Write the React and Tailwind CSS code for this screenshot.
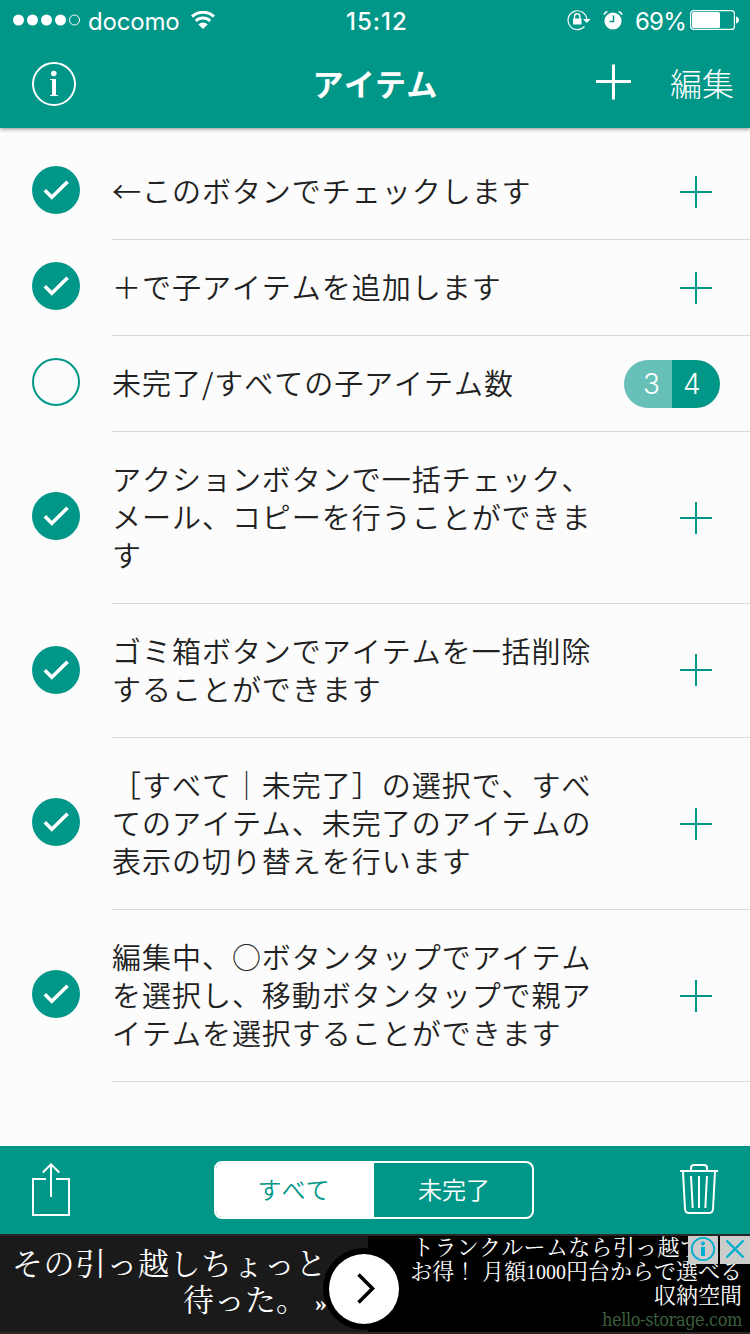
import React, { useState } from 'react';

const initialItems = [
  { id: 1, lines: ['←このボタンでチェックします'], done: true },
  { id: 2, lines: ['＋で子アイテムを追加します'], done: true },
  { id: 3, lines: ['未完了/すべての子アイテム数'], done: false, open: 3, total: 4 },
  { id: 4, lines: ['アクションボタンで一括チェック、', 'メール、コピーを行うことができま', 'す'], done: true },
  { id: 5, lines: ['ゴミ箱ボタンでアイテムを一括削除', 'することができます'], done: true },
  { id: 6, lines: ['［すべて｜未完了］の選択で、すべ', 'てのアイテム、未完了のアイテムの', '表示の切り替えを行います'], done: true },
  { id: 7, lines: ['編集中、○ボタンタップでアイテム', 'を選択し、移動ボタンタップで親ア', 'イテムを選択することができます'], done: true },
];

const StatusBar = () => (
  <div className="flex h-10 items-center pl-[13px] font-['Inter'] text-2xl leading-10">
    <svg width="68" height="12" viewBox="0 0 68 12" fill="white">
      <circle cx="5.5" cy="6" r="5.5" />
      <circle cx="19.5" cy="6" r="5.5" />
      <circle cx="33.5" cy="6" r="5.5" />
      <circle cx="47.5" cy="6" r="5.5" />
      <circle cx="61.5" cy="6" r="5" fill="none" stroke="white" />
    </svg>
    <span className="ml-[7px] w-[91px] pt-[3px] whitespace-nowrap tracking-[-0.2px]">docomo</span>
    <svg className="ml-3" width="24" height="18" viewBox="0 0 24 18" fill="none" stroke="white" strokeWidth="3">
      <path d="M1 5.6a16 16 0 0 1 22 0" />
      <path d="M4.8 9.8a10.5 10.5 0 0 1 14.4 0" />
      <path d="M12 18 7.3 13.4a7 7 0 0 1 9.4 0Z" fill="white" stroke="none" />
    </svg>
    <span className="ml-[131px] w-[64px] pt-[3px] whitespace-nowrap font-medium tracking-[1px]">15:12</span>
    <svg className="ml-[157px]" width="24" height="22" viewBox="0 0 24 22" fill="none" stroke="white" strokeWidth="1.2">
      <path d="M17.5 17.4A9.4 9.4 0 1 1 19.8 10.5" />
      <path d="M16 10h7.5l-3.7 4Z" fill="white" stroke="none" />
      <path d="M6 9.5h8.5v6H6Z" fill="white" stroke="none" />
      <path d="M7.5 10V7.5a2.7 2.7 0 0 1 5.4 0V10" strokeWidth="1.4" />
    </svg>
    <svg className="ml-3" width="20" height="20" viewBox="0 0 20 20">
      <circle cx="10" cy="11" r="8.6" fill="white" />
      <path d="M1 4.6A5 5 0 0 1 4.4 1.6M15.6 1.6A5 5 0 0 1 19 4.6" stroke="white" strokeWidth="1.6" fill="none" />
      <path d="M10.5 5.5v6H6.5" stroke="#009688" strokeWidth="1.5" fill="none" />
    </svg>
    <span className="ml-3 w-[50px] pt-[3px] whitespace-nowrap tracking-[-0.8px]">69%</span>
    <svg className="ml-[5px] shrink-0" width="50" height="20" viewBox="0 0 50 20">
      <rect x="0.6" y="0.6" width="43.8" height="18.8" rx="3" fill="none" stroke="white" strokeWidth="1.2" />
      <rect x="2" y="2" width="28" height="16" rx="1.5" fill="white" />
      <path d="M46 6.5q3 1 3 3.5t-3 3.5Z" fill="white" />
    </svg>
  </div>
);

const InfoIcon = () => (
  <svg width="44" height="44" viewBox="0 0 44 44" fill="white">
    <circle cx="22" cy="22" r="21" fill="none" stroke="white" strokeWidth="2" />
    <circle cx="21.8" cy="11.5" r="2.8" />
    <path d="M18 17h6v16h2v1h-8v-1h2V18h-2Z" />
  </svg>
);

const CheckCircle = ({ done, onClick }) => (
  <button onClick={onClick} className="size-12">
    <svg width="48" height="48" viewBox="0 0 48 48" fill="none">
      {done ? (
        <>
          <circle cx="24" cy="24" r="24" fill="#009688" />
          <path d="m12.8 24.3 7 7L35.6 15.8" stroke="white" strokeWidth="3.6" />
        </>
      ) : (
        <circle cx="24" cy="24" r="23" stroke="#009688" strokeWidth="2" />
      )}
    </svg>
  </button>
);

const ItemRow = ({ item, onToggle }) => (
  <li className="flex">
    <div className={`flex w-28 items-center pl-8 ${item.lines.length === 2 ? 'pb-0.5' : 'pb-1'}`}>
      <CheckCircle done={item.done} onClick={() => onToggle(item.id)} />
    </div>
    <div className="flex flex-1 items-center border-b border-[#d9d9d9]">
      <p className="flex-1 whitespace-nowrap pt-[27px] pb-[30px] text-[29px] font-[350] leading-[38px] tracking-[0.97px] text-[#212121]">
        {item.lines.map((line) => (
          <span key={line} className="block">{line}</span>
        ))}
      </p>
      {item.total ? (
        <div className="mr-[30px] flex h-12 overflow-hidden rounded-full font-['Inter'] text-[28px] font-[350] leading-[48px] text-white">
          <span className="w-12 bg-[#66c0b8] pl-[19px]">{item.open}</span>
          <span className="w-12 bg-[#009688] pl-[11px]">{item.total}</span>
        </div>
      ) : (
        <svg
          className={item.lines.length === 2 ? 'mr-[38px] mb-0.5' : 'mr-[38px]'}
          width="32"
          height="32"
          viewBox="0 0 32 32"
          stroke="#009688"
          strokeWidth="2"
        >
          <path d="M16 0v32M0 16h32" />
        </svg>
      )}
    </div>
  </li>
);

const AdBanner = () => (
  <div className="relative flex h-[100px] overflow-hidden border-y-2 border-[#2b2727] bg-black font-['Noto_Serif_CJK_JP','Noto_Serif_JP',serif] text-white">
    <div className="w-[368px] bg-[#1a1a1a] pt-2 pr-[41px] text-right text-[31px] leading-9 whitespace-nowrap">
      <p className="h-9 tracking-[0.5px]">その引っ越しちょっと</p>
      <p className="h-9">待った。<span className="ml-2 font-['Liberation_Serif'] text-2xl font-bold">»</span></p>
    </div>
    <div className="flex-1 pr-2 text-right text-[22px] leading-6 whitespace-nowrap">
      <p className="h-[22px] pr-10 leading-[20px] tracking-[0.3px]">トランクルームなら引っ越す</p>
      <p className="h-6">お得！ 月額<span className="font-['Liberation_Serif'] text-xl">1000</span>円台からで選べる</p>
      <p className="h-6">収納空間</p>
      <p className="pt-0.5 font-['DejaVu_Serif_Condensed','DejaVu_Serif'] text-lg leading-6 tracking-[-0.4px] text-[#3a5f3c]">hello-storage.com</p>
    </div>
    <div className="absolute top-3 left-[323px] flex size-[82px] items-center justify-center rounded-full bg-black">
      <svg width="70" height="70" viewBox="0 0 70 70" fill="none">
        <circle cx="35" cy="35" r="35" fill="white" />
        <path d="m29.5 20.5 14 14-14 14" stroke="black" strokeWidth="3.6" />
      </svg>
    </div>
    <div className="absolute -top-0.5 right-0 flex h-[30px] gap-0.5 text-[#00aecd]">
      <svg className="bg-[#cccccc]" width="30" height="30" viewBox="0 0 30 30" fill="none" stroke="currentColor">
        <circle cx="15" cy="15" r="11.2" strokeWidth="1.8" />
        <circle cx="15" cy="9.5" r="2" fill="currentColor" stroke="none" />
        <path d="M13 13h4v9h-4Z" fill="currentColor" stroke="none" />
      </svg>
      <svg className="bg-[#cccccc]" width="30" height="30" viewBox="0 0 30 30" fill="none" stroke="currentColor">
        <path d="m6.5 6.5 17 17m0-17-17 17" strokeWidth="2.4" />
      </svg>
    </div>
  </div>
);

const App = () => {
  const [items, setItems] = useState(initialItems);
  const [filter, setFilter] = useState('all');

  const toggleItem = (id) => {
    setItems((prev) => prev.map((item) => (item.id === id ? { ...item, done: !item.done } : item)));
  };

  const visibleItems = filter === 'all' ? items : items.filter((item) => !item.done);

  return (
    <div className="flex h-[1334px] w-[750px] flex-col overflow-hidden bg-[#fcfcfc] font-['Noto_Sans_CJK_JP',sans-serif] [font-kerning:none]">
      <header className="z-10 h-32 bg-[#009688] text-white shadow-[0_1px_4px_rgba(0,0,0,0.45)]">
        <StatusBar />
        <div className="grid h-[88px] grid-cols-3 items-center px-4">
          <div className="pl-4"><InfoIcon /></div>
          <h1 className="pb-0.5 text-center text-[31px] font-bold leading-[44px] tracking-[0.3px]">アイテム</h1>
          <div className="flex items-center justify-end gap-[38px]">
            <svg className="-mt-1" width="36" height="36" viewBox="0 0 36 36" stroke="white" strokeWidth="3">
              <path d="M17.5 0.5v35M0 17.5h35" />
            </svg>
            <button className="pb-1 text-[32px] font-light leading-[44px]">編集</button>
          </div>
        </div>
      </header>

      <main className="flex-1 pt-4">
        <ul>
          {visibleItems.map((item) => (
            <ItemRow key={item.id} item={item} onToggle={toggleItem} />
          ))}
        </ul>
      </main>

      <footer className="flex h-[88px] items-center justify-between bg-[#009688] px-8">
        <svg width="38" height="54" viewBox="0 0 38 54" fill="none" stroke="white" strokeWidth="2">
          <path d="M14 16H1v36h36V16H24" />
          <path d="M19 34V1M10.8 9.5 19 1.3l8.2 8.2" />
        </svg>
        <div className="mr-0.5 flex h-[58px] w-80 overflow-hidden rounded-lg border-2 border-white text-2xl font-[350]">
          <button
            onClick={() => setFilter('all')}
            className={`w-1/2 pr-[3px] pb-0.5 ${filter === 'all' ? 'bg-white text-[#009688]' : 'text-white'}`}
          >
            すべて
          </button>
          <button
            onClick={() => setFilter('open')}
            className={`w-1/2 pb-0.5 pl-0.5 ${filter === 'open' ? 'bg-white text-[#009688]' : 'text-white'}`}
          >
            未完了
          </button>
        </div>
        <svg className="mb-0.5" width="38" height="50" viewBox="0 0 38 50" fill="none" stroke="white" strokeWidth="2">
          <path d="M0 7h38M11 7V4q0-3 3-3h10q3 0 3 3v3" />
          <path d="m3 8 2 37q.3 4 4 4h20q3.7 0 4-4l2-37" />
          <path d="m11 12 1.7 32M19 12v32M27 12l-1.7 32" />
        </svg>
      </footer>
      <AdBanner />
    </div>
  );
};

export default App;
